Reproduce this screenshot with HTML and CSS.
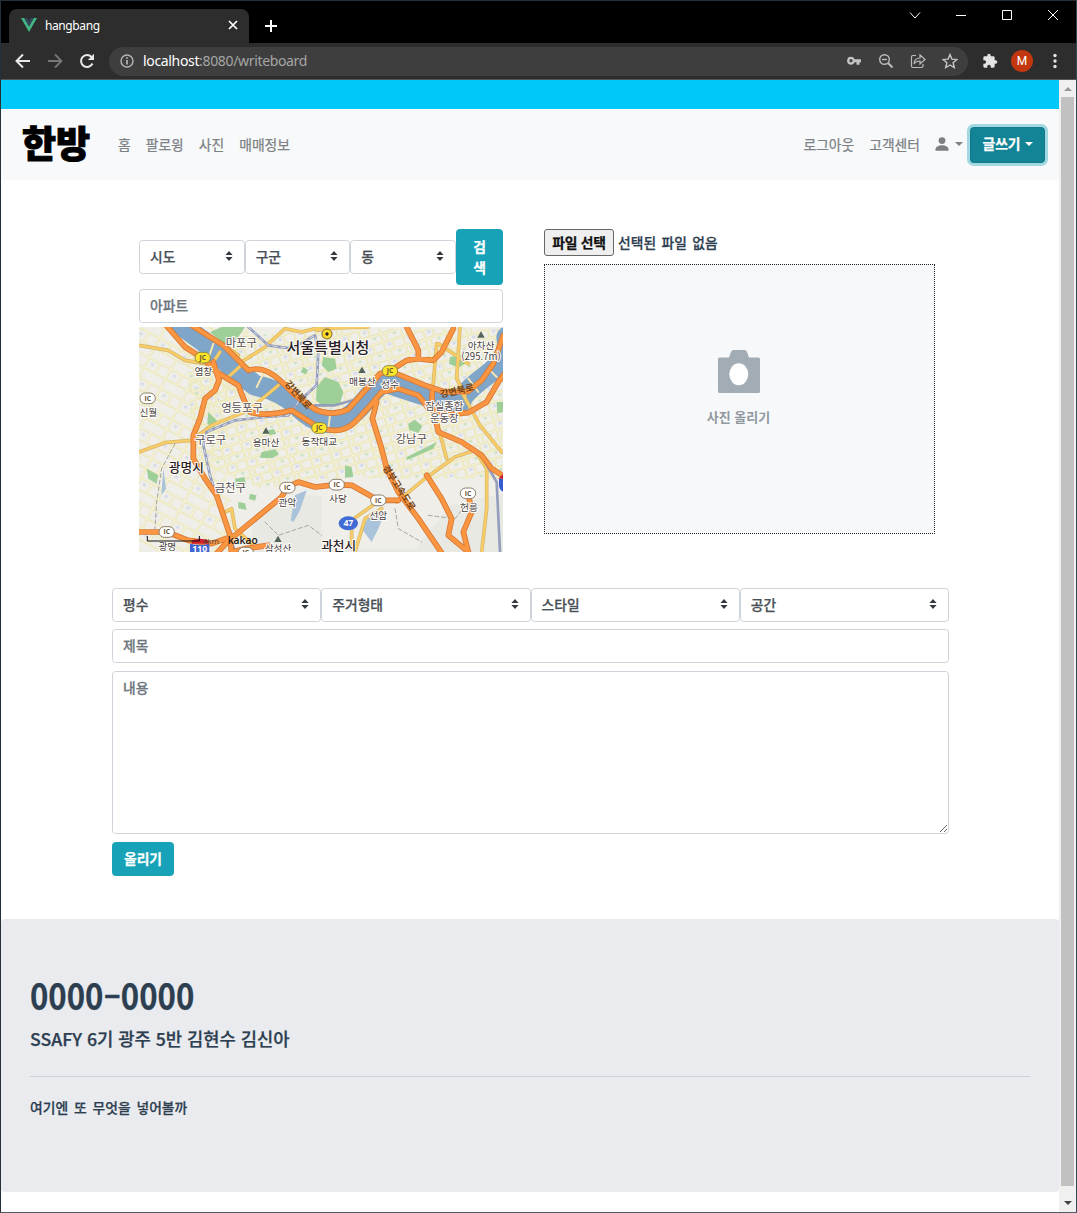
FILE: index.html
```html
<!DOCTYPE html>
<html lang="ko">
<head>
<meta charset="utf-8">
<title>hangbang</title>
<link rel="stylesheet" href="styles.css">
</head>
<body>
<svg width="0" height="0" class="defs">
  <symbol id="updown" viewBox="0 0 8 10"><path d="M4 0 7.6 4H.4ZM4 10 .4 6h7.2Z" fill="#343a40"/></symbol>
</svg>
<div class="window">
  <div class="tabstrip">
    <div class="tab">
      <svg class="vue" width="16" height="14" viewBox="0 0 16 14"><path d="M0 0h3.2L8 8.4 12.8 0H16L8 14Z" fill="#41b883"/><path d="M3.2 0H6l2 3.6L10 0h2.8L8 8.4Z" fill="#35495e"/></svg>
      <span class="tab-title">hangbang</span>
      <svg width="10" height="10" viewBox="0 0 10 10" fill="none" stroke="#fff" stroke-width="1.7"><path d="m1 1 8 8M9 1 1 9"/></svg>
    </div>
    <svg class="newtab" width="12" height="12" viewBox="0 0 12 12" fill="none" stroke="#fff" stroke-width="2"><path d="M6 0v12M0 6h12"/></svg>
    <div class="controls">
      <svg width="12" height="12" viewBox="0 0 12 12"><path d="m1 3.5 5 5.500 5-5.500"/></svg>
      <svg width="12" height="12" viewBox="0 0 12 12"><path d="M1 6.500h10"/></svg>
      <svg width="12" height="12" viewBox="0 0 12 12"><path d="M1.500 1.500h9v9h-9z"/></svg>
      <svg width="12" height="12" viewBox="0 0 12 12"><path d="m1 1 10 10M11 1 1 11"/></svg>
    </div>
  </div>
  <div class="toolbar">
    <svg width="16" height="16" viewBox="0 0 16 16" fill="none" stroke="#e8e8e8" stroke-width="2"><path d="M15 8H2M8 1.500 1.500 8 8 14.500"/></svg>
    <svg width="16" height="16" viewBox="0 0 16 16" fill="none" stroke="#777" stroke-width="1.800"><path d="M1 8h13M8 1.500 14.500 8 8 14.500"/></svg>
    <svg width="16" height="16" viewBox="0 0 16 16" fill="none" stroke="#e8e8e8" stroke-width="2"><path d="M13.500 10.500A6 6 0 1 1 12.500 4"/><path d="M15 .8V7H8.800Z" fill="#e8e8e8" stroke="none"/></svg>
    <div class="address">
      <svg width="14" height="14" viewBox="0 0 14 14" fill="none" stroke="#b4b4b4" stroke-width="1.400"><circle cx="7" cy="7" r="6"/><path d="M7 6v4.500M7 3.300v1.500" stroke-width="1.700"/></svg>
      <span class="url">localhost<span class="dim">:8080/writeboard</span></span>
      <div class="actions">
        <svg width="16" height="16" viewBox="0 0 16 16"><path fill="#c4c4c4" fill-rule="evenodd" d="M5 3.800a3.900 3.900 0 1 0 3.600 5.400h1.900v2.500h3V9.200H15V6.200H8.600A3.900 3.900 0 0 0 5 3.800Zm0 2.300a1.600 1.600 0 1 1 0 3.200 1.600 1.600 0 0 1 0-3.200Z"/></svg>
        <svg width="16" height="16" viewBox="0 0 16 16" fill="none" stroke="#bcbcbc" stroke-width="1.400"><circle cx="6.500" cy="6.500" r="4.800"/><path d="M4 6.500h5"/><path d="m10 10 4.500 4.500" stroke-width="2"/></svg>
        <svg width="16" height="16" viewBox="0 0 16 16" fill="none" stroke="#bcbcbc" stroke-width="1.200"><path d="M6 2.500H3a1.500 1.500 0 0 0-1.500 1.500v9A1.500 1.500 0 0 0 3 14.500h8.500A1.500 1.500 0 0 0 13 13v-2"/><path d="M4 11c.3-4.500 2.700-6 6-6V1.800l5 4.700-5 4.500V8C7.500 8 5.500 8.500 4 11Z"/></svg>
        <svg width="16" height="16" viewBox="0 0 16 16" fill="none" stroke="#c4c4c4" stroke-width="1.400"><path d="m8 1.500 1.900 4.600 5 .4-3.800 3.200 1.200 4.900L8 12l-4.300 2.600 1.200-4.900L1.100 6.500l5-.4Z"/></svg>
      </div>
    </div>
    <svg class="puzzle" width="16" height="16" viewBox="0 0 24 24" fill="#e4e4e4"><path d="M20.500 11H19V7a2 2 0 0 0-2-2h-4V3.500a2.500 2.500 0 0 0-5 0V5H4a2 2 0 0 0-2 2v3.800h1.500a2.700 2.700 0 0 1 0 5.400H2V20c0 1.100.9 2 2 2h3.800v-1.500a2.700 2.700 0 0 1 5.400 0V22H17a2 2 0 0 0 2-2v-4h1.500a2.500 2.500 0 0 0 0-5Z"/></svg>
    <span class="avatar">M</span>
    <svg width="4" height="16" viewBox="0 0 4 16" fill="#e4e4e4"><circle cx="2" cy="2.500" r="1.700"/><circle cx="2" cy="8" r="1.700"/><circle cx="2" cy="13.500" r="1.700"/></svg>
  </div>

  <div class="viewport">
    <div class="page">
      <div class="stripe"></div>
      <nav class="navbar">
        <span class="logo">한방</span>
        <div class="links"><span>홈</span><span>팔로윙</span><span>사진</span><span>매매정보</span></div>
        <div class="links right"><span>로그아웃</span><span>고객센터</span>
          <span class="user"><svg width="14" height="14" viewBox="0 0 14 14" fill="#7c8083"><circle cx="7" cy="3.600" r="3.400"/><path d="M.5 13.700c-.6-3.500 2.500-5.400 6.500-5.400s7.100 1.900 6.500 5.400Z"/></svg><i class="caret"></i></span>
        </div>
        <button class="btn write">글쓰기<i class="caret"></i></button>
      </nav>

      <main class="main">
        <div class="top">
          <section class="search">
            <div class="region">
              <div class="select">시도<svg width="8" height="10"><use href="#updown"/></svg></div>
              <div class="select">구군<svg width="8" height="10"><use href="#updown"/></svg></div>
              <div class="select">동<svg width="8" height="10"><use href="#updown"/></svg></div>
              <button class="btn find">검<br>색</button>
            </div>
            <input class="field" placeholder="아파트">
            <svg class="map" width="364" height="225" viewBox="12 15 1092 675">
              <defs>
                <pattern id="grid" width="62" height="54" patternUnits="userSpaceOnUse" patternTransform="rotate(-17)"><path d="M0 5h62M12 0v54M0 34h62M42 5v29M26 34v20" fill="none" stroke="#d9d6a4" stroke-width="6"/><path d="M0 5h62M12 0v54M0 34h62M42 5v29M26 34v20" fill="none" stroke="#fffbd5" stroke-width="3"/><path d="M24 12h10v8H24z" fill="#d3daec"/><path d="M48 40h9v6h-9z" fill="#c4e0bd"/></pattern>
                <pattern id="grid2" width="74" height="66" patternUnits="userSpaceOnUse" patternTransform="rotate(28)"><path d="M0 8h74M14 0v66M0 42h74M52 8v34" fill="none" stroke="#dcd9ac" stroke-width="6"/><path d="M0 8h74M14 0v66M0 42h74M52 8v34" fill="none" stroke="#fffbd9" stroke-width="3"/><path d="M28 18h9v8h-9z" fill="#d3daec"/></pattern>
                <g id="peak"><path d="m0-10 11 19h-22Z" fill="#53645d"/></g>
                <g id="ic"><rect x="-23" y="-16" width="46" height="32" rx="16" fill="#fff" stroke="#8d7e68" stroke-width="3"/><text y="7" class="badge">IC</text></g>
                <g id="jc"><rect x="-23" y="-16" width="46" height="32" rx="16" fill="#ffe52b" stroke="#8e8a45" stroke-width="3"/><text y="7" class="badge">JC</text></g>
              </defs>
              <path fill="#f0eee8" d="M0 0h1120v700H0z"/>
              <path fill="url(#grid2)" d="M0 0h350l-90 400 60 290H0z"/>
              <path fill="url(#grid)" d="M150 60 560 20h560v450H560l-180 30-200-80z"/>
              <path fill="#e9e9e3" d="M350 600 430 550l60-35 160 20 90 30 180-10 184-40v190H350z"/>
              <path fill="#efeee9" d="M560 500l80-50 90 30 60 50 110-60 40 90-100 120H560z"/>
              <g fill="#9fcf98">
                <path d="M545 195l25-30 40 15 15 30-10 35-50 10-22-20zM565 105l35 5 5 30-25 10-20-20zM380 390l40-8 12 15-20 12-38-2zM820 305l20-12 22 20-12 20-28-10zM945 105l35-5 15 22-25 15-28-12zM300 470l28-5 5 20-30 8zM35 440l35 20-5 25-25-15zM225 30l35-15 70 0-30 45-35 5zM220 270l25 25-8 25-20-15zM310 540l20 4 5 20-25-5zM630 430l20 5 5 30-25 2zM815 405l90-45-10 20-80 35zM1085 240l20 0v30l-18 4zM505 135l15 10-8 12-15-6zM345 515l20 5-5 16-18-5zM400 325l16-4 8 14-20 5z"/>
              </g>
              <g fill="#a9c3db"><path d="M480 520l35-15-20 60-20 35-8-5zM680 620l25-40 45-10-20 50-20 40zM85 440l8 60-14 20z"/></g>
              <g fill="none" stroke-linecap="round" stroke-linejoin="round">
                <path d="M125 0 205 58 285 130 360 190Q440 205 490 255T590 302T690 237T756 182T875 222T980 235T1055 160T1115 45" stroke="#7fa5c9" stroke-width="62"/>
                <path d="M12 70 100 85 150 115 230 128M12 390 90 362 170 355 230 310 340 265 430 190M255 90 215 150M318 130 280 165M320 120 390 75 450 20 500 30 560 15M270 70 310 100M785 540 870 470 960 405 1020 385 1055 440 1055 560 1040 690M980 210 1035 310 1100 390M905 65 890 240 935 410M910 65 1000 125M975 15 965 170 990 220M545 25 600 18 700 15M650 680 650 595 720 545M660 690 690 590 740 560M270 570 290 560 300 620 350 665" stroke="#d5b56b" stroke-width="11"/>
                <path d="M12 70 100 85 150 115 230 128M12 390 90 362 170 355 230 310 340 265 430 190M255 90 215 150M318 130 280 165M320 120 390 75 450 20 500 30 560 15M270 70 310 100M785 540 870 470 960 405 1020 385 1055 440 1055 560 1040 690M980 210 1035 310 1100 390M905 65 890 240 935 410M910 65 1000 125M975 15 965 170 990 220M545 25 600 18 700 15M650 680 650 595 720 545M660 690 690 590 740 560M270 570 290 560 300 620 350 665" stroke="#f8cd67" stroke-width="7"/>
                <path d="M235 65 220 110M385 155 365 195M1000 170 1030 210M1060 140 1085 165M585 280 580 320" stroke="#f4e5b0" stroke-width="6"/>
                <path d="M340 15 400 70 470 80 540 40 550 90 545 190 490 240 460 280 390 285 300 295 215 330 205 370 225 460 260 570 300 690M540 250 600 250 670 230 740 170M1050 420 1085 480 1095 690" stroke="#959dbc" stroke-width="8"/>
                <path d="M340 15 400 70 470 80 540 40 550 90 545 190 490 240 460 280 390 285 300 295 215 330 205 370 225 460 260 570 300 690" stroke="#dce0ec" stroke-width="3" stroke-dasharray="12 12"/>
                <path d="M120 365 80 440 65 540 60 620M390 600 430 640 520 610 560 640M780 560 790 620 860 660M880 580 960 590 1000 540" stroke="#a6a69c" stroke-width="3" stroke-dasharray="12 8"/>
                <path class="casing" d="M170 10 265 70 340 145Q370 135 400 150T475 215L540 262Q590 285 640 262L690 205 735 155 765 147 815 115 850 110 895 115 920 90 955 20M815 15 850 85 850 110M765 147 870 190 930 210 1000 208 1040 175 1075 125 1105 40M95 12 150 75 205 110 245 150 310 190Q330 245 345 270 390 285 470 265L552 317Q620 340 660 300T740 210L790 200 850 220 880 258 940 278 1000 272 1055 240 1090 180 1120 140M235 120 252 175 240 205 210 230 195 290 175 340 175 410 210 470 245 520 265 580 285 640 290 700M10 630 95 630 160 655 230 665 300 640 440 525 457 495 490 480 540 495 605 488 650 490 730 535 790 535M725 240 712 290 740 380 755 440 790 510 850 590 925 700M892 210 890 240 910 330 980 360 1040 400 1070 440 1110 465M875 460 920 530 950 590 940 640 1000 690M1000 515 1010 570 985 630 1000 690M240 700 290 645M290 690 330 680 400 670"/>
                <path class="road" d="M170 10 265 70 340 145Q370 135 400 150T475 215L540 262Q590 285 640 262L690 205 735 155 765 147 815 115 850 110 895 115 920 90 955 20M815 15 850 85 850 110M765 147 870 190 930 210 1000 208 1040 175 1075 125 1105 40M95 12 150 75 205 110 245 150 310 190Q330 245 345 270 390 285 470 265L552 317Q620 340 660 300T740 210L790 200 850 220 880 258 940 278 1000 272 1055 240 1090 180 1120 140M235 120 252 175 240 205 210 230 195 290 175 340 175 410 210 470 245 520 265 580 285 640 290 700M10 630 95 630 160 655 230 665 300 640 440 525 457 495 490 480 540 495 605 488 650 490 730 535 790 535M725 240 712 290 740 380 755 440 790 510 850 590 925 700M892 210 890 240 910 330 980 360 1040 400 1070 440 1110 465M875 460 920 530 950 590 940 640 1000 690M1000 515 1010 570 985 630 1000 690M240 700 290 645M290 690 330 680 400 670"/>
              </g>
              <use href="#jc" x="203" y="107"/><use href="#jc" x="765" y="147"/><use href="#jc" x="553" y="318"/>
              <use href="#ic" x="38" y="229"/><use href="#ic" x="457" y="497"/><use href="#ic" x="95" y="630"/><use href="#ic" x="605" y="488"/><use href="#ic" x="730" y="535"/><use href="#ic" x="999" y="514"/><use href="#ic" x="332" y="692"/>
              <use href="#peak" x="393" y="326"/><use href="#peak" x="681" y="144"/><use href="#peak" x="1038" y="38"/><use href="#peak" x="429" y="651"/>
              <circle cx="576" cy="36" r="15" fill="#ffd92b" stroke="#76652b" stroke-width="3"/><circle cx="576" cy="36" r="5" fill="#222"/>
              <ellipse cx="640" cy="604" rx="29" ry="21" fill="#416bd5"/><text x="640" y="613" class="route">47</text>
              <path d="M165 665q30 8 58 0v30h-58z" fill="#3f63d0"/><path d="M170 655q25-10 50 0v10h-50z" fill="#d3202d"/><text x="194" y="691" class="route">110</text>
              <path d="M1092 470h15v40q-15-5-15-20z" fill="#365bd0"/><path d="M1090 470l14-14v14z" fill="#c51d2c"/>
              <g class="place">
                <text x="319" y="75">마포구</text><text x="321" y="270">영등포구</text><text x="227" y="366">구로구</text><text x="286" y="511">금천구</text><text x="829" y="363">강남구</text>
                <g class="small"><text x="205" y="159">염창</text><text x="40" y="282">신월</text><text x="393" y="371">용마산</text><text x="553" y="368" class="left">동작대교</text><text x="457" y="551">관악</text><text x="97" y="684">광명</text><text x="429" y="689">삼성산</text><text x="682" y="188">매봉산</text><text x="765" y="197">성수</text><text x="1038" y="80">아차산</text><text x="1038" y="115">(295.7m)</text><text x="609" y="540">사당</text><text x="730" y="590">선암</text><text x="1002" y="568">헌릉</text></g>
                <text x="928" y="265" class="mid">잠실종합</text><text x="928" y="301" class="mid">운동장</text>
                <g class="city"><text x="579" y="92" class="seoul">서울특별시청</text><text x="154" y="450">광명시</text><text x="611" y="685">과천시</text></g>
                <g class="roadname"><text transform="translate(482 225) rotate(48)">강변북로</text><text transform="translate(968 216) rotate(-13)">강변북로</text><text transform="translate(784 502) rotate(57)">경부고속도로</text></g>
              </g>
              <path d="M37 642v15h156v-15" fill="none" stroke="#111" stroke-width="3"/><text x="203" y="665" class="km">4km</text><text x="278" y="665" class="kakao">kakao</text>
            </svg>
          </section>
          <section class="upload">
            <div class="file"><button>파일 선택</button><span>선택된 파일 없음</span></div>
            <div class="drop">
              <svg width="42" height="43" viewBox="0 0 42 43"><path fill="#a2acb4" d="M11 7.500 13 2q.6-2 2.500-2h11q2 0 2.500 2l2 5.500h9.500Q42 7.500 42 9v32.500q0 1.500-1.500 1.500h-39Q0 43 0 41.500V9q0-1.500 1.500-1.500Z"/><ellipse cx="20.800" cy="24.300" rx="9.500" ry="11" fill="#fff"/></svg>
              <span>사진 올리기</span>
            </div>
          </section>
        </div>
        <form class="write-form">
          <div class="options">
            <div class="select">평수<svg width="8" height="10"><use href="#updown"/></svg></div>
            <div class="select">주거형태<svg width="8" height="10"><use href="#updown"/></svg></div>
            <div class="select">스타일<svg width="8" height="10"><use href="#updown"/></svg></div>
            <div class="select">공간<svg width="8" height="10"><use href="#updown"/></svg></div>
          </div>
          <input class="field" placeholder="제목">
          <textarea class="field area" placeholder="내용"></textarea>
          <button type="button" class="btn submit">올리기</button>
        </form>
      </main>

      <footer class="footer">
        <h1>0000<b>-</b>0000</h1>
        <p class="lead">SSAFY 6기 광주 5반 김현수 김신아</p>
        <hr>
        <p class="note">여기엔 또 무엇을 넣어볼까</p>
      </footer>
    </div>
    <div class="scrollbar"><i class="up"></i><div class="thumb"></div><i class="down"></i></div>
  </div>
</div>
</body>
</html>
```
FILE: styles.css
```css
* { box-sizing: border-box; }
body { margin: 0; overflow: hidden; background: #fff; font-family: "Noto Sans CJK KR", sans-serif; font-size: 13.800px; font-weight: 500; color: #2c3e50; }
svg { display: block; flex: none; }
.defs { position: absolute; }
button, input, textarea { font: inherit; margin: 0; }
.window { width: 1077px; height: 1213px; display: flex; flex-direction: column; border: 1px solid #263038; border-right-color: #34495a; border-bottom-color: #515962; }

.tabstrip { height: 42px; flex: none; background: #000; display: flex; padding: 8px 0 0 8px; }
.tab { width: 240px; height: 34px; background: #2d2d2d; border-radius: 8px 8px 0 0; display: flex; align-items: center; padding: 0 11px 2px 12px; color: #fff; font: 12px "Noto Sans", sans-serif; }
.tab-title { flex: 1; margin-left: 8px; letter-spacing: -.4px; }
.newtab { margin: 11px 0 0 16px; }
.controls { margin-left: auto; display: flex; gap: 34px; padding-right: 17px; fill: none; stroke: #fff; }

.toolbar { height: 37px; flex: none; background: #2d2d2d; border-bottom: 1px solid #555; display: flex; align-items: center; padding: 0 19px 0 14px; }
.toolbar > svg:nth-child(-n+2) { margin-right: 16px; }
.address { width: 860px; height: 29px; margin: 0 14px 0 14px; border-radius: 15px; background: #3e3e3e; display: flex; align-items: center; padding: 0 10px 0 11px; color: #fff; font: 14px "Noto Sans", sans-serif; }
.url { margin-left: 9px; letter-spacing: -.34px; padding-bottom: 1px; }
.dim { color: #a5a5a5; }
.actions { margin-left: auto; display: flex; gap: 16px; }
.avatar { width: 22px; height: 22px; border-radius: 50%; background: #c2370f; color: #fff; text-align: center; font: 12px/22px Roboto, sans-serif; margin: 0 20px 0 13px; }

.viewport { flex: 1; min-height: 0; display: flex; }
.page { width: 1058px; background: #fff; display: flex; flex-direction: column; -webkit-text-stroke: .25px; }
.stripe { height: 29px; background: #00c8f8; flex: none; }
.navbar { height: 71px; flex: none; background: #f7f9fb; display: flex; align-items: center; padding: 0 14px 0 21px; color: #7d8184; }
.logo { color: #000; font-size: 37px; font-weight: 900; line-height: 40px; width: 96px; -webkit-text-stroke: 1px #000; padding-bottom: 6px; }
.links { display: flex; gap: 15px; font-weight: 400; padding-bottom: 2px; }
.right { margin-left: auto; }
.user { display: flex; align-items: center; gap: 6px; }
.caret { display: inline-block; border: 4.500px solid transparent; border-top-color: currentColor; border-bottom: 0; margin-left: 4px; vertical-align: 3px; }
.user .caret { margin: 0; }
.btn { border: 1px solid #17a2b8; background: #17a2b8; color: #fff; border-radius: 3.600px; font-weight: 700; text-align: center; padding: 0 0 1px; line-height: 21px; }
.write { width: 75px; height: 36px; margin-left: 7px; background: #138496; border-color: #117a8b; box-shadow: 0 0 0 3px #a1d8e1; padding-bottom: 2px; }

.main { width: 837px; margin: 49px 0 43px 111px; display: flex; flex-direction: column; }
.top { display: flex; gap: 41px; padding-left: 27px; margin-bottom: 36px; }
.search { width: 364px; }
.region { display: flex; align-items: center; margin-bottom: 4px; }
.select { flex: 1; height: 34px; border: 1px solid #ced4da; border-radius: 3.600px; display: flex; align-items: center; justify-content: space-between; padding: 0 11px 2px 10px; color: #495057; background: #fff; }
.find { width: 47px; height: 56px; }
.field { display: block; width: 100%; height: 34px; border: 1px solid #ced4da; border-radius: 3.600px; padding: 0 10px 2px; background: #fff; outline: 0; color: #495057; }
.field::placeholder { color: #6c757d; opacity: 1; }
.search .field { margin-bottom: 4px; }
.upload { width: 391px; }
.file { display: flex; align-items: center; height: 27px; gap: 4px; margin-bottom: 8px; word-spacing: 1.500px; color: #2c3e50; }
.file span { padding-bottom: 2px; }
.file button { width: 70px; height: 27px; padding: 0 0 2px; border: 1px solid #666; border-radius: 3px; background: #efefef; color: #111; font-weight: 700; letter-spacing: -.2px; line-height: 20px; }
.drop { height: 270px; border: 1px dotted #222; background: #f7f8fa; display: flex; flex-direction: column; align-items: center; padding: 85px 2px 0 0; gap: 14px; color: #9198a0; font-weight: 700; font-size: 13px; line-height: 20px; }
.drop span { -webkit-text-stroke: 0; }
.options { display: flex; margin-bottom: 7px; }
.write-form .field { margin-bottom: 8px; }
.write-form .area { height: 163px; padding-top: 5px; line-height: 20px; resize: vertical; }
.submit { width: 62px; height: 34px; display: block; }

.map { background: #f2f0e8; -webkit-text-stroke: 0; }
.casing { stroke: #d67835; stroke-width: 17px; }
.road { stroke: #fa9541; stroke-width: 12px; }
.map text { font-family: "Noto Sans CJK KR", sans-serif; }
.place text { text-anchor: middle; font-size: 34px; font-weight: 400; fill: #544d55; stroke: #fffdf7; stroke-width: 6px; paint-order: stroke; }
.place .small text { font-size: 29px; fill: #443e45; }
.place .mid { font-size: 31px; }
.place .city text { font-size: 38px; font-weight: 500; fill: #292229; }
.place .city .seoul { font-size: 45px; }
.place .roadname text { font-size: 28px; fill: #744416; stroke: none; font-weight: 700; }
.map .badge { font: 700 20px "Open Sans", sans-serif; text-anchor: middle; fill: #645132; }
.map .route { font: 700 26px "Open Sans", sans-serif; text-anchor: middle; fill: #fff; }
.map .km { font: 24px "Open Sans", sans-serif; fill: #443b37; }
.map .kakao { font: 600 31px "Open Sans", sans-serif; fill: #1b1820; }

.footer { height: 273px; border-radius: 4px; background: #e9ebee; padding: 54px 29px 0; color: #2c3e50; }
.footer h1 { margin: 0; width: max-content; font-size: 36px; line-height: 43px; font-weight: 700; transform: scaleX(.865); transform-origin: left; }
.footer h1 b { display: inline-block; width: 20px; text-align: center; font-weight: 500; transform: scaleX(1.700); }
.lead { margin: 10px 0 0; font-size: 17.700px; line-height: 24px; height: 24px; font-weight: 500; }
.footer hr { border: 0; height: 1px; background: #ced1d6; margin: 26px 0 19px; }
.note { margin: 0; line-height: 22px; word-spacing: 2px; }

.scrollbar { width: 17px; background: #f0f0f0; display: flex; flex-direction: column; align-items: center; }
.thumb { width: 13px; height: 1089px; background: #c1c1c1; }
.up { margin: 7px 0 6px; border: 4px solid transparent; border-top: 0; border-bottom-color: #999; }
.down { margin-top: 15px; border: 4px solid transparent; border-bottom: 0; border-top-color: #444; }
```
